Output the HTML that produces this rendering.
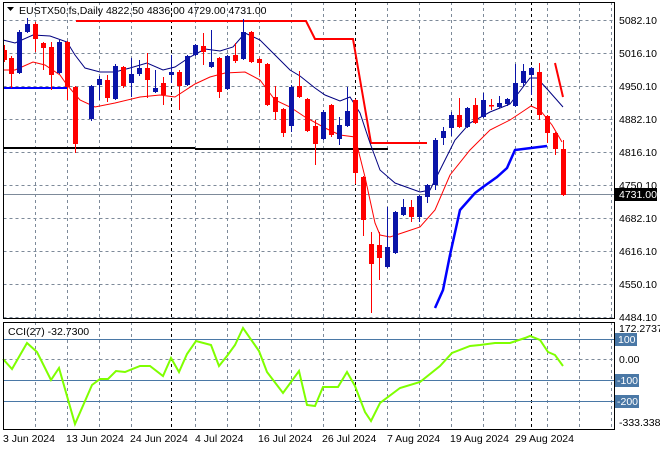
<!DOCTYPE html>
<html><head><meta charset="utf-8"><style>
html,body{margin:0;padding:0;background:#fff;}
svg{display:block;font-family:"Liberation Sans",Arial,sans-serif;}
.g{stroke:#7d8a99;stroke-width:1;stroke-dasharray:3,3;fill:none}
.k{stroke:#000;stroke-width:1;stroke-dasharray:3,3;fill:none}
.r line{stroke:#ff0000}.r rect{fill:#ff0000}
.b line{stroke:#0a14a8}.b rect{fill:#0a14a8}
text{font-size:10.5px;fill:#000}
</style></head><body>
<svg width="660" height="450" viewBox="0 0 660 450" xmlns="http://www.w3.org/2000/svg">
<rect width="660" height="450" fill="#fff"/>
<g class="g">
<path d="M3.5 20.5H614M3.5 53.5H614M3.5 86.5H614M3.5 119.5H614M3.5 152.5H614M3.5 185.5H614M3.5 218.5H614M3.5 251.5H614M3.5 284.5H614M3.5 317.5H614"/>
<path d="M35.5 2V318M67.5 2V318M99.5 2V318M131.5 2V318M195.5 2V318M227.5 2V318M259.5 2V318M291.5 2V318M323.5 2V318M387.5 2V318M419.5 2V318M451.5 2V318M483.5 2V318M515.5 2V318M547.5 2V318M579.5 2V318M611.5 2V318"/>
<path d="M35.5 322V429M67.5 322V429M99.5 322V429M131.5 322V429M195.5 322V429M227.5 322V429M259.5 322V429M291.5 322V429M323.5 322V429M387.5 322V429M419.5 322V429M451.5 322V429M483.5 322V429M515.5 322V429M547.5 322V429M579.5 322V429M611.5 322V429M3.5 359.5H614"/>
</g>
<g class="k"><path d="M171.5 2V318M355.5 2V318M531.5 2V318M171.5 322V429M355.5 322V429M531.5 322V429"/></g>
<path d="M3 194.5H614" stroke="#7d8a99" stroke-width="1"/>
<path d="M3 339.5H614M3 380.5H614M3 401.5H614" stroke="#4a78a6" stroke-width="1"/>
<path d="M3 148H195M195 149H388" stroke="#000" stroke-width="2"/>
<path d="M76 21H306L315 39H353L371 143H427" stroke="#ff0000" stroke-width="2" fill="none"/>
<path d="M555 63L563 97" stroke="#ff0000" stroke-width="2" fill="none"/>
<path d="M3 88H67" stroke="#0000ff" stroke-width="2"/>
<path d="M435 308L443 290L450 255L460 210L475 193L483 187L497 177L507 168L515 150L531 148L547 146" stroke="#0000ff" stroke-width="2.5" fill="none"/>
<polyline fill="none" stroke="#000080" stroke-width="1" points="3,40 15,43 33,35 50,36 67,42 75,55 85,68 100,72 115,72 130,68 147,63 163,70 175,67 190,57 205,49 220,51 233,47 245,33 260,40 275,55 290,70 300,76 315,88 325,95 340,101 350,97 360,113 370,143 380,170 395,183 420,192 430,190 440,170 455,140 470,123 490,112 510,104 530,78 537,78 548,90 563,107"/>
<polyline fill="none" stroke="#ff0000" stroke-width="1" points="3,70 15,70 33,62 45,65 60,75 67,85 80,100 95,107 115,103 140,97 160,95 175,97 195,84 210,77 225,73 245,72 260,80 275,100 290,107 305,117 325,128 340,135 355,137 365,177 375,223 380,235 390,237 405,232 420,227 435,210 450,175 470,150 490,130 510,120 525,110 531,106 540,110 552,125 562,142"/>
<g class="r">
<line x1="4.5" y1="45" x2="4.5" y2="62"/><rect x="3" y="50" width="4" height="10"/>
<line x1="11.5" y1="56" x2="11.5" y2="88"/><rect x="9" y="58" width="5" height="16"/>
<line x1="35.5" y1="22" x2="35.5" y2="52"/><rect x="33" y="24" width="5" height="15"/>
<line x1="43.5" y1="42" x2="43.5" y2="70"/><rect x="41" y="43" width="5" height="5"/>
<line x1="51.5" y1="42" x2="51.5" y2="90"/><rect x="49" y="47" width="5" height="28"/>
<line x1="67.5" y1="41" x2="67.5" y2="100"/><rect x="65" y="42" width="5" height="45"/>
<line x1="75.5" y1="86" x2="75.5" y2="153"/><rect x="73" y="87" width="5" height="57"/>
<line x1="107.5" y1="75" x2="107.5" y2="102"/><rect x="105" y="80" width="5" height="18"/>
<line x1="123.5" y1="66" x2="123.5" y2="88"/><rect x="121" y="67" width="5" height="19"/>
<line x1="147.5" y1="53" x2="147.5" y2="98"/><rect x="145" y="68" width="5" height="12"/>
<line x1="163.5" y1="77" x2="163.5" y2="105"/><rect x="161" y="83" width="5" height="12"/>
<line x1="179.5" y1="70" x2="179.5" y2="110"/><rect x="177" y="72" width="5" height="14"/>
<line x1="203.5" y1="33" x2="203.5" y2="65"/><rect x="201" y="46" width="5" height="6"/>
<line x1="219.5" y1="57" x2="219.5" y2="98"/><rect x="217" y="58" width="5" height="34"/>
<line x1="235.5" y1="43" x2="235.5" y2="63"/><rect x="233" y="55" width="5" height="6"/>
<line x1="251.5" y1="31" x2="251.5" y2="63"/><rect x="249" y="32" width="5" height="30"/>
<line x1="259.5" y1="58" x2="259.5" y2="75"/><rect x="257" y="59" width="5" height="4"/>
<line x1="267.5" y1="63" x2="267.5" y2="106"/><rect x="265" y="64" width="5" height="41"/>
<line x1="275.5" y1="86" x2="275.5" y2="120"/><rect x="273" y="97" width="5" height="15"/>
<line x1="283.5" y1="108" x2="283.5" y2="137"/><rect x="281" y="109" width="5" height="24"/>
<line x1="299.5" y1="71" x2="299.5" y2="98"/><rect x="297" y="86" width="5" height="11"/>
<line x1="307.5" y1="98" x2="307.5" y2="132"/><rect x="305" y="99" width="5" height="32"/>
<line x1="315.5" y1="120" x2="315.5" y2="165"/><rect x="313" y="126" width="5" height="18"/>
<line x1="331.5" y1="104" x2="331.5" y2="137"/><rect x="329" y="105" width="5" height="30"/>
<line x1="355.5" y1="99" x2="355.5" y2="184"/><rect x="353" y="100" width="5" height="73"/>
<line x1="363.5" y1="176" x2="363.5" y2="236"/><rect x="361" y="177" width="5" height="43"/>
<line x1="371.5" y1="232" x2="371.5" y2="313"/><rect x="369" y="244" width="5" height="20"/>
<line x1="379.5" y1="232" x2="379.5" y2="280"/><rect x="377" y="245" width="5" height="13"/>
<line x1="411.5" y1="200" x2="411.5" y2="222"/><rect x="409" y="207" width="5" height="10"/>
<line x1="459.5" y1="98" x2="459.5" y2="128"/><rect x="457" y="115" width="5" height="12"/>
<line x1="475.5" y1="98" x2="475.5" y2="124"/><rect x="473" y="105" width="5" height="18"/>
<line x1="491.5" y1="99" x2="491.5" y2="110"/><rect x="489" y="105" width="5" height="1.5"/>
<line x1="539.5" y1="63" x2="539.5" y2="120"/><rect x="537" y="72" width="5" height="43"/>
<line x1="547.5" y1="115" x2="547.5" y2="143"/><rect x="545" y="116" width="5" height="17"/>
<line x1="555.5" y1="132" x2="555.5" y2="155"/><rect x="553" y="133" width="5" height="16"/>
<line x1="563.5" y1="140" x2="563.5" y2="196"/><rect x="561" y="149" width="5" height="46"/>
</g>
<g class="b">
<line x1="19.5" y1="30" x2="19.5" y2="74"/><rect x="17" y="32" width="5" height="41"/>
<line x1="27.5" y1="18" x2="27.5" y2="33"/><rect x="25" y="24" width="5" height="8"/>
<line x1="59.5" y1="40" x2="59.5" y2="74"/><rect x="57" y="42" width="5" height="31"/>
<line x1="91.5" y1="85" x2="91.5" y2="121"/><rect x="89" y="86" width="5" height="33"/>
<line x1="99.5" y1="76" x2="99.5" y2="100"/><rect x="97" y="79" width="5" height="6"/>
<line x1="115.5" y1="64" x2="115.5" y2="100"/><rect x="113" y="66" width="5" height="33"/>
<line x1="131.5" y1="58" x2="131.5" y2="97"/><rect x="129" y="74" width="5" height="9"/>
<line x1="139.5" y1="60" x2="139.5" y2="76"/><rect x="137" y="68" width="5" height="6"/>
<line x1="155.5" y1="70" x2="155.5" y2="93"/><rect x="153" y="88" width="5" height="4"/>
<line x1="171.5" y1="55" x2="171.5" y2="83"/><rect x="169" y="72" width="5" height="3"/>
<line x1="187.5" y1="55" x2="187.5" y2="86"/><rect x="185" y="56" width="5" height="29"/>
<line x1="195.5" y1="44" x2="195.5" y2="56"/><rect x="193" y="45" width="5" height="10"/>
<line x1="211.5" y1="30" x2="211.5" y2="68"/><rect x="209" y="62" width="5" height="5"/>
<line x1="227.5" y1="55" x2="227.5" y2="90"/><rect x="225" y="56" width="5" height="33"/>
<line x1="243.5" y1="19" x2="243.5" y2="60"/><rect x="241" y="32" width="5" height="27"/>
<line x1="291.5" y1="85" x2="291.5" y2="132"/><rect x="289" y="87" width="5" height="39"/>
<line x1="323.5" y1="110" x2="323.5" y2="140"/><rect x="321" y="112" width="5" height="27"/>
<line x1="339.5" y1="117" x2="339.5" y2="145"/><rect x="337" y="125" width="5" height="14"/>
<line x1="347.5" y1="87" x2="347.5" y2="127"/><rect x="345" y="111" width="5" height="15"/>
<line x1="387.5" y1="207" x2="387.5" y2="268"/><rect x="385" y="247" width="5" height="20"/>
<line x1="395.5" y1="211" x2="395.5" y2="254"/><rect x="393" y="212" width="5" height="41"/>
<line x1="403.5" y1="199" x2="403.5" y2="216"/><rect x="401" y="207" width="5" height="8"/>
<line x1="419.5" y1="195" x2="419.5" y2="222"/><rect x="417" y="196" width="5" height="21"/>
<line x1="427.5" y1="184" x2="427.5" y2="203"/><rect x="425" y="185" width="5" height="12"/>
<line x1="435.5" y1="138" x2="435.5" y2="190"/><rect x="433" y="140" width="5" height="45"/>
<line x1="443.5" y1="127" x2="443.5" y2="145"/><rect x="441" y="131" width="5" height="7"/>
<line x1="451.5" y1="112" x2="451.5" y2="136"/><rect x="449" y="115" width="5" height="13"/>
<line x1="467.5" y1="107" x2="467.5" y2="128"/><rect x="465" y="108" width="5" height="19"/>
<line x1="483.5" y1="93" x2="483.5" y2="118"/><rect x="481" y="100" width="5" height="17"/>
<line x1="499.5" y1="96" x2="499.5" y2="108"/><rect x="497" y="103" width="5" height="4"/>
<line x1="507.5" y1="98" x2="507.5" y2="106"/><rect x="505" y="99" width="5" height="5"/>
<line x1="515.5" y1="64" x2="515.5" y2="107"/><rect x="513" y="83" width="5" height="23"/>
<line x1="523.5" y1="64" x2="523.5" y2="86"/><rect x="521" y="71" width="5" height="12"/>
<line x1="531.5" y1="67" x2="531.5" y2="95"/><rect x="529" y="68" width="5" height="7"/>
</g>
<polyline fill="none" stroke="#7fff00" stroke-width="2" points="3,359 12,369 27,343 37,352 51,380 59,368 75,424 92,385 100,379 108,379 116,371 125,372 140,366 150,366 163,376 171,358 179,372 187,354 196,341 211,345 219,366 227,356 235,345 243,328 259,351 267,372 283,393 299,371 307,405 315,406 323,387 338,387 347,372 355,386 365,412 371,421 380,403 400,388 420,382 440,366 452,353 470,346 480,345 495,343 510,343 525,338 530,336 540,340 548,352 555,355 563,366"/>
<rect x="3.5" y="2.5" width="611" height="316" fill="none" stroke="#000"/>
<rect x="3.5" y="322.5" width="611" height="107" fill="none" stroke="#000"/>
<path d="M7 7H14L10.5 11Z" fill="#000"/>
<text x="19" y="14">EUSTX50.fs,Daily  4822.50 4836.00 4729.00 4731.00</text>
<text x="8" y="335">CCI(27) -32.7300</text>
<g>
<text x="619" y="24">5082.10</text>
<text x="619" y="57">5016.10</text>
<text x="619" y="90">4950.10</text>
<text x="619" y="123">4882.10</text>
<text x="619" y="156">4816.10</text>
<text x="619" y="189">4750.10</text>
<rect x="615" y="188" width="42" height="13" fill="#000"/>
<text x="619" y="198" style="fill:#fff">4731.00</text>
<text x="619" y="222">4682.10</text>
<text x="619" y="255">4616.10</text>
<text x="619" y="288">4550.10</text>
<text x="619" y="321">4484.10</text>
<text x="619" y="332">172.2737</text>
<rect x="615" y="333" width="22" height="13" fill="#4a78a6"/>
<text x="618" y="343" style="fill:#fff">100</text>
<text x="619" y="363">0.00</text>
<rect x="615" y="374" width="24" height="13" fill="#4a78a6"/>
<text x="617" y="384" style="fill:#fff">-100</text>
<rect x="615" y="395" width="24" height="13" fill="#4a78a6"/>
<text x="617" y="405" style="fill:#fff">-200</text>
<text x="619" y="426">-333.3385</text>
</g>
<g>
<text x="3" y="442">3 Jun 2024</text>
<text x="66" y="442">13 Jun 2024</text>
<text x="130" y="442">24 Jun 2024</text>
<text x="195" y="442">4 Jul 2024</text>
<text x="258" y="442">16 Jul 2024</text>
<text x="322" y="442">26 Jul 2024</text>
<text x="387" y="442">7 Aug 2024</text>
<text x="450" y="442">19 Aug 2024</text>
<text x="515" y="442">29 Aug 2024</text>
</g>
</svg>
</body></html>
